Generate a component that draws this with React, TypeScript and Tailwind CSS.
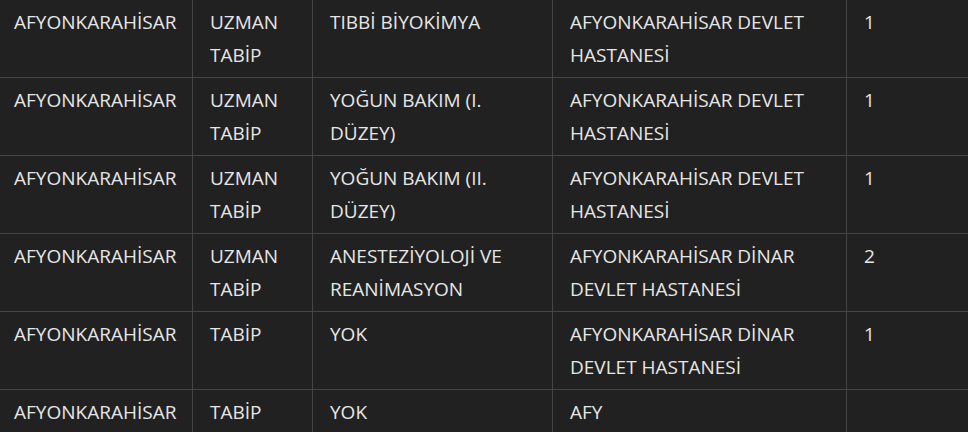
const rows = [
  ["AFYONKARAHİSAR", "UZMAN TABİP", "TIBBİ BİYOKİMYA", "AFYONKARAHİSAR DEVLET HASTANESİ", "1"],
  ["AFYONKARAHİSAR", "UZMAN TABİP", "YOĞUN BAKIM (I. DÜZEY)", "AFYONKARAHİSAR DEVLET HASTANESİ", "1"],
  ["AFYONKARAHİSAR", "UZMAN TABİP", "YOĞUN BAKIM (II. DÜZEY)", "AFYONKARAHİSAR DEVLET HASTANESİ", "1"],
  ["AFYONKARAHİSAR", "UZMAN TABİP", "ANESTEZİYOLOJİ VE REANİMASYON", "AFYONKARAHİSAR DİNAR DEVLET HASTANESİ", "2"],
  ["AFYONKARAHİSAR", "TABİP", "YOK", "AFYONKARAHİSAR DİNAR DEVLET HASTANESİ", "1"],
  ["AFYONKARAHİSAR", "TABİP", "YOK", "AFY", ""],
];

export default function App() {
  return (
    <div
      className="w-[968px] h-[432px] overflow-hidden bg-[#212121] text-[#e6e6e6]"
      style={{ fontFamily: '"Open Sans", "Noto Sans", sans-serif' }}
    >
      <table className="-ml-[4px] -mt-px w-[1000px] table-fixed border-collapse text-[19px]">
        <colgroup>
          <col className="w-[196px]" />
          <col className="w-[120px]" />
          <col className="w-[240px]" />
          <col className="w-[294px]" />
          <col className="w-[150px]" />
        </colgroup>
        <tbody>
          {rows.map((r, i) => (
            <tr key={i}>
              {r.map((c, j) => (
                <td
                  key={j}
                  className="border border-[#454545] px-[17px] pt-[6px] pb-[5px] align-top leading-[33px]"
                >
                  {c}
                </td>
              ))}
            </tr>
          ))}
        </tbody>
      </table>
    </div>
  );
}
